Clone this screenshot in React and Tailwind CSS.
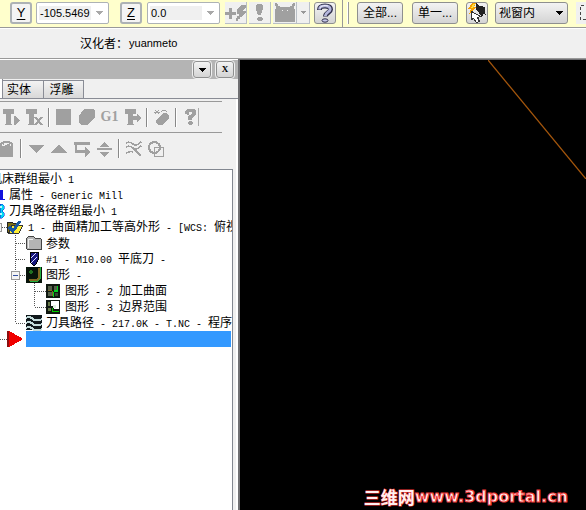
import React from "react";

const cjk = 'font-["Liberation_Sans","Noto_Sans_CJK_SC",sans-serif]';

/* Half-width characters take half the advance of a full-width one. */
function Mono({ text }) {
  return text.split(/([\x20-\x7e]+)/).map((part, i) =>
    /^[\x20-\x7e]+$/.test(part) ? (
      <span key={i} className='whitespace-pre font-["Liberation_Mono",monospace] text-[10px]'>{part}</span>
    ) : (
      <span key={i}>{part}</span>
    )
  );
}

function Icon({ w = 16, h = 16, className = "", children }) {
  return (
    <svg width={w} height={h} viewBox={`0 0 ${w} ${h}`} className={`block shrink-0 ${className}`} shapeRendering="crispEdges" aria-hidden="true">
      {children}
    </svg>
  );
}

const raised = "flex shrink-0 items-center justify-center rounded-[3px] border border-[#8e8f8f] bg-linear-to-b from-[#f3f3f3] to-[#d4d4d4] text-black";

function AxisButton({ children }) {
  return (
    <button className="flex size-[22px] shrink-0 items-center justify-center rounded-[3px] border-2 border-[#adb2b5] bg-[#f4f4f4] pb-px text-[13px] leading-none underline underline-offset-2">
      {children}
    </button>
  );
}

function Combo({ label, value, fill }) {
  return (
    <div className="flex h-[22px] w-[73px] shrink-0 items-center rounded-[2px] border border-[#adb2b5] bg-white pl-0.5">
      <input aria-label={label} defaultValue={value} className={`h-[14px] min-w-0 px-px text-[11px] leading-[14px] outline-none ${fill}`} />
      <button aria-label={`${label} list`} className="flex h-full flex-1 items-center justify-center">
        <Icon w={7} h={4}><path d="M0 0h7v1h-1v1h-1v1h-1v1h-1v-1h-1v-1h-1v-1h-1z" fill="#a9a9a9" /></Icon>
      </button>
    </div>
  );
}

function TopButton({ label, w = "w-[22px]", children }) {
  return (
    <button aria-label={label} className={`flex h-[22px] ${w} shrink-0 items-center justify-center border-r border-b border-[#b9bfc6] bg-[#f0f0f0]`}>
      {children}
    </button>
  );
}

function TopBar() {
  return (
    <div className="flex h-[28px] shrink-0 overflow-hidden border-b border-[#999] bg-[#ffffcc]">
      <div className="flex w-[343px] shrink-0 items-start border-r border-[#999] pt-0.5 pl-2.5">
        <AxisButton>Y</AxisButton>
        <div className="ml-1 flex"><Combo label="Y" value="-105.5469" fill="w-[52px] bg-[#f0f0f0]" /></div>
        <div className="ml-[11px] flex"><AxisButton>Z</AxisButton></div>
        <div className="ml-[5px] flex"><Combo label="Z" value="0.0" fill="w-[52px] bg-[#f0f0f0]" /></div>
        <div className="ml-[5px] flex gap-0.5">
          <TopButton label="Fast point">
            <Icon w={22} h={18}>
              <path d="M4 4h3v4h4v3h-4v4h-3v-4h-4v-3h4z" fill="#a0a0a0" />
              <path d="M16 1h5v2l-3 4h3v2l-5 4h-1v2h-2v2h-2v-3h1v-2h2v-2h-2v-4z" fill="#a0a0a0" />
            </Icon>
          </TopButton>
          <TopButton label="Point options">
            <Icon w={12} h={18}><path d="M3 0h5l1 2v3l-2 6h-3l-2-6v-3zM4 13h4l1 2-1 2h-4l-1-2z" fill="#a0a0a0" /></Icon>
          </TopButton>
          <div className="flex">
            <TopButton label="Snap" w="w-[24px]">
              <Icon w={22} h={19}>
                <path d="M1 0h2v1h1v2h2v1h10v-1h2v-2h1v-1h2v3h-1v3h1v13h-20v-13h1v-3h-1z" fill="#a0a0a0" />
                <path d="M8 7h1v1h-1zM13 7h1v1h-1z" fill="#f0f0f0" />
              </Icon>
            </TopButton>
            <TopButton label="Snap list" w="w-[13px]">
              <Icon w={5} h={3}><path d="M0 0h5v1h-1v1h-1v1h-1v-1h-1v-1h-1z" fill="#999" /></Icon>
            </TopButton>
          </div>
        </div>
        <button aria-label="Help" className={`${raised} ml-1 h-[22px] w-[22px]`}>
          <svg width="18" height="20" viewBox="0 0 18 20" aria-hidden="true">
            <path d="M3.500 7C3.500 3.500 6 3 9 3c4 0 5.500 1 5.500 3.500C14.500 9.500 9.500 9.500 9.500 13.500" fill="none" stroke="#30304a" strokeWidth="5" />
            <path d="M3.500 6.500C3.500 3.500 6 2.800 9 2.800c3.500 0 5.200 1 5.200 3.500C14 9 9.300 9.500 9.300 13" fill="none" stroke="#b4b6dc" strokeWidth="2.800" />
            <path d="M4 4.500C6 2.500 9 2 12 3" fill="none" stroke="#f4f4ff" />
            <ellipse cx="9" cy="17.500" rx="3" ry="1.700" fill="#c4c6e8" stroke="#30304a" />
          </svg>
        </button>
      </div>
      <div className="mt-0.5 ml-1 h-[22px] w-0.5 shrink-0 border-r border-[#999] bg-white" />
      <div className="ml-2 flex shrink-0 items-start pt-0.5">
        <button className={`${raised} h-[22px] w-[46px] pb-px text-xs`}>全部...</button>
        <button className={`${raised} ml-[9px] h-[22px] w-[46px] pb-px text-xs`}>单一...</button>
        <button aria-label="Select" className={`${raised} ml-2 h-[22px] w-[22px]`}>
          <Icon w={20} h={20}>
            <path d="M5 0h4l-2 4h3l-8 7 2-5h-3z" fill="#f5a000" />
            <path d="M6 1h2l-2 4h-2z" fill="#ffe040" />
            <path d="M9 0l4 3 5 1v5l1 3-3-1-2 1-4-4-1-3z" fill="#222" />
            <path d="M13 10l3 3" stroke="#222" strokeWidth="2" />
            <path d="M4.500 8.500v8l2-1 3 4 3-1-2-4 3-1z" fill="#fff" stroke="#333" />
          </Icon>
        </button>
        <div className="ml-[7px] grid items-center">
          <select aria-label="View" className="col-start-1 row-start-1 h-[22px] w-[73px] appearance-none rounded-[3px] border border-[#8e8f8f] bg-linear-to-b from-[#f3f3f3] to-[#d4d4d4] pl-[3px] text-xs leading-none text-black">
            <option>视窗内</option>
          </select>
          <Icon w={7} h={4} className="pointer-events-none col-start-1 row-start-1 mr-[5px] justify-self-end"><path d="M0 0h7v1h-1v1h-1v1h-1v1h-1v-1h-1v-1h-1v-1h-1z" fill="#000" /></Icon>
        </div>
        <button aria-label="Window" className="ml-2 h-[22px] w-6 bg-[#f0f0f0]">
          <Icon w={24} h={22}><path d="M4.500 3.500h18v14h-18z" fill="none" stroke="#444" strokeDasharray="3 2" /></Icon>
        </button>
      </div>
    </div>
  );
}

const g = "#a0a0a0";

function Tool({ label, children }) {
  return <button aria-label={label} className="flex h-[22px] w-[23px] shrink-0 items-center justify-center">{children}</button>;
}
function Sep() {
  return <div className="mx-[2px] h-[19px] w-0.5 shrink-0 border-l border-[#888] bg-white" />;
}

function ToolRows() {
  return (
    <div className="mr-[11px]">
      <div className="flex h-[31px] items-center border-t border-[#999]">
        <Tool label="Select all"><Icon w={17}><path d="M0 0h11v5h-3v10h1v1h-7v-1h1v-10h-3zM11 7h1l5 4-5 5h-1z" fill={g} /></Icon></Tool>
        <Tool label="Select dirty"><Icon w={17}><path d="M0 0h11v5h-3v10h1v1h-7v-1h1v-10h-3z" fill={g} /><path d="M9 8l7 8M16 8l-7 8" stroke={g} strokeWidth="2" /></Icon></Tool>
        <Sep />
        <Tool label="Regenerate all"><Icon><path d="M0 0h15v16h-15z" fill={g} /></Icon></Tool>
        <Tool label="Regenerate dirty"><Icon><path d="M5 0h9l2 2v7l-6 5-2 2h-6l-2-3v-6z" fill={g} /></Icon></Tool>
        <Tool label="Post"><span className='font-["Liberation_Serif",serif] text-sm leading-none font-bold text-[#a0a0a0]'>G1</span></Tool>
        <Tool label="Highfeed"><Icon><path d="M0 0h11v5h-3v10h1v1h-7v-1h1v-10h-3zM8 7h4v-3l4 5-4 5v-3h-4z" fill={g} /></Icon></Tool>
        <Sep />
        <Tool label="Verify"><Icon w={15}><path d="M2 11l7-7h3l3 3v2l-7 7h-4l-2-2z" fill={g} /><path d="M1 1l4 4M5 1l-4 4M0 3h6" stroke={g} /><path d="M7 3l2-2h2l2 2" fill="none" stroke={g} /></Icon></Tool>
        <Sep />
        <Tool label="Help"><Icon w={13}><path d="M1 5v-3l2-2h7l2 2v4l-4 3v2h-4v-4l4-2v-2h-3v3zM5 12h3l1 2-1 2h-3l-1-2z" fill={g} /></Icon></Tool>
        <div className="-ml-1 h-[18px] w-px bg-[#a9a9a9]" />
      </div>
      <div className="-ml-[5px] flex h-[32px] items-center border-t border-[#999]">
        <Tool label="Lock"><Icon w={13}><path d="M0 5h13v11h-13z" fill={g} /><path d="M1 6v-3l3-2h5l3 2v3" fill="none" stroke={g} strokeWidth="2" /><path d="M3 3h7v3h-7z" fill={g} /><path d="M3 5v-1h1v-1h3" fill="none" stroke="#f0f0f0" /></Icon></Tool>
        <Sep />
        <Tool label="Move down"><Icon><path d="M0 4h16l-8 8z" fill={g} /></Icon></Tool>
        <Tool label="Move up"><Icon><path d="M0 12h16l-8-9z" fill={g} /></Icon></Tool>
        <Tool label="Insert"><Icon><path d="M0 1h16v3h-13v5h8v-3l5 5-5 5v-4h-10v-8h-1z" fill={g} /></Icon></Tool>
        <Tool label="Scroll"><Icon w={15}><path d="M7 1l5 5h-10zM0 7h15v2h-15zM2 11h11l-6 5z" fill={g} /></Icon></Tool>
        <Sep />
        <Tool label="Toolpath display"><Icon><path d="M0 2q4-2 7 1t8-2M0 6q4-2 7 1t8-2M0 12q4-2 7-1M8 8l7 7" fill="none" stroke={g} strokeWidth="1.500" /></Icon></Tool>
        <Tool label="Geometry display"><Icon w={17}><circle cx="6.500" cy="6.500" r="5.500" fill="none" stroke={g} strokeWidth="2" /><path d="M6.500 6.500h9v9h-9z" fill="none" stroke={g} /></Icon></Tool>
      </div>
    </div>
  );
}

function Guide({ w, d, box }) {
  return (
    <Icon w={w} h={16}>
      <path d={d} fill="none" stroke="#555" strokeDasharray="1 1" />
      {box !== undefined && (
        <>
          <rect x={box + 0.5} y="4.500" width="8" height="8" fill="#f4f4f4" stroke="#999" />
          <path d={`M${box + 2} 8.500h5`} stroke="#3350a0" />
        </>
      )}
    </Icon>
  );
}

function Row({ guide, icon, text, gap = "ml-1" }) {
  return (
    <li className="flex h-4 items-center whitespace-nowrap">
      {guide}
      {icon}
      <span className={`${gap} leading-4`}><Mono text={text} /></span>
    </li>
  );
}

function Tree() {
  return (
    <ul className='flex-1 overflow-hidden border-t border-r border-[#828790] bg-white pt-px pr-px font-["Noto_Sans_CJK_SC",sans-serif] text-xs text-black'>
      <Row text="机床群组最小 1" gap="-ml-2.5" />
      <Row icon={<Icon w={5}><path d="M0 3h3v10h-3zM0 12h5v1h-5z" fill="#1111dd" /></Icon>} text="属性 - Generic Mill" />
      <Row icon={<Icon w={5}><path d="M0 1h2l2 2v3l-2 2 2 2v3l-2 2h-2z" fill="#00d8f0" stroke="#1111dd" strokeWidth=".5" /><path d="M0 3h2v2h-2zM0 10h2v2h-2z" fill="#b8f8ff" /></Icon>} text="刀具路径群组最小 1" />
      <Row
        guide={<Guide w={7} d="M2 8.500h5" box={-7} />}
        icon={<Icon><path d="M.5 3.500h5l1 1h4v9h-10z" fill="#7a6c14" stroke="#222" /><path d="M5 6h11l-4 8h-10z" fill="#ffee33" stroke="#333" /><path d="M2 8l4 4 7-10" fill="none" stroke="#1858a0" strokeWidth="3" /></Icon>}
        text="1 - 曲面精加工等高外形 - [WCS: 俯视"
        gap="ml-[5px]"
      />
      <Row
        guide={<Guide w={26} d="M15.500 0v16M16 8.500h10" />}
        icon={<Icon><path d="M.5 3.500l2-2h5l2 2h5l1 1v10h-14l-1-1z" fill="#b4b4b4" stroke="#444" /><path d="M2 4h5M2 5v8" stroke="#eee" /></Icon>}
        text="参数"
      />
      <Row
        guide={<Guide w={26} d="M15.500 0v16M16 8.500h10" />}
        icon={<Icon><path d="M4 1h8v8l-2 4-2 2-4-4z" fill="#16167c" stroke="#000" /><path d="M5 7l5-5M5 12l6-6" stroke="#d8d8ff" /></Icon>}
        text="#1 - M10.00 平底刀 - "
      />
      <Row
        guide={<Guide w={26} d="M15.500 0v16M16 8.500h10" box={11} />}
        icon={<Icon><path d="M0 0h16v16h-16z" fill="#07130a" /><path d="M4 3h1v1h1v1h-1v1h-1v-1h-1v-1h1z" fill="#30a030" stroke="#207020" /><path d="M12 1h2v11l-2 2h-9v-2h7l2-2z" fill="#806820" /><path d="M14 0v12l-2 2h-8" fill="none" stroke="#20b040" /></Icon>}
        text="图形 - "
      />
      <Row
        guide={<Guide w={46} d="M15.500 0v16M34.500 0v16M35 8.500h11" />}
        icon={<Icon w={14} h={14}><path d="M0 0h14v14h-14z" fill="#101810" /><path d="M2 2h4v4h-4zM8 2h4v4h-4zM2 8h4v4h-4z" fill="#56604a" /><path d="M2 6h4v1h-4zM6 7h1v5h-1z" fill="#806820" /><path d="M8 6h4v2h-4zM7 8h1v5h-1zM11 2h1v4h-1z" fill="#00d820" /><path d="M9 9h3v3h-3z" fill="#305030" /></Icon>}
        text="图形 - 2 加工曲面"
        gap="ml-[5px]"
      />
      <Row
        guide={<Guide w={46} d="M15.500 0v16M34.500 0v8M35 8.500h11" />}
        icon={<Icon w={14} h={14}><path d="M0 0h14v14h-14z" fill="#101810" /><path d="M5 1h8v8h-5v-3h-3z" fill="#fff" /><path d="M2 2h2v4h-2zM2 8h3v3h-3z" fill="#687848" /><path d="M7 5h3v3h-3z" fill="#dff0df" /><path d="M6 11h7v1h-7zM6 8h1v3h-1z" fill="#00cf00" /></Icon>}
        text="图形 - 3 边界范围"
        gap="ml-[5px]"
      />
      <Row
        guide={<Guide w={26} d="M15.500 0v8M16 8.500h10" />}
        icon={<Icon><path d="M0 0h16v15h-16z" fill="#10181c" /><path d="M0 3q4-2 7 1t9 0M0 8q4-2 7 1t9 0M0 13q4-2 7 1t9 0" fill="none" stroke="#c4dcdc" strokeWidth="2" /></Icon>}
        text="刀具路径 - 217.0K - T.NC - 程序"
      />
      <li className="flex h-4 items-center">
        <Guide w={7} d="M0 8.500h7" />
        <Icon w={19}><path d="M0 0h2l13 7v2l-13 7h-2z" fill="#f00000" /><path d="M0 0h2v16h-2z" fill="#8c1010" /></Icon>
        <div className="h-4 flex-1 bg-[#3399ff]" />
      </li>
    </ul>
  );
}

function Panel() {
  return (
    <aside className="flex w-[240px] shrink-0 flex-col border-r-2 border-[#6f6f72] bg-[#f0f0f0]">
      <div className="flex h-[20px] shrink-0 items-center justify-end gap-[5px] border-t border-white bg-[#b4b4b4] pr-1">
        <button aria-label="Panel menu" className={`${raised} h-[17px] w-[18px] outline outline-[#f0f0f0]`}>
          <Icon w={7} h={4}><path d="M0 0h7v1h-1v1h-1v1h-1v1h-1v-1h-1v-1h-1v-1h-1z" fill="#000" /></Icon>
        </button>
        <button aria-label="Close" className={`${raised} h-[17px] w-[18px] font-["Liberation_Serif",serif] text-[9px] leading-none font-bold outline outline-[#f0f0f0]`}>X</button>
      </div>
      <div className="flex h-[20px] shrink-0 items-end border-b border-[#898c95]" role="tablist">
        <div className="h-[19px] w-[3px] border-r border-[#898c95] bg-white" />
        <button role="tab" className="h-[18px] w-[41px] border-t border-r border-[#898c95] bg-linear-to-b from-[#f3f3f3] to-[#d8d8d8] pr-2 text-xs leading-4">实体</button>
        <button role="tab" className="h-[18px] w-[40px] border-t border-r border-[#898c95] bg-linear-to-b from-[#f3f3f3] to-[#d8d8d8] pr-1 text-xs leading-4">浮雕</button>
      </div>
      <div className="flex flex-1 flex-col border-r-2 border-white pt-0.5">
        <div className="flex flex-1 flex-col pr-[3px]">
          <div className="h-[68px] shrink-0 overflow-hidden"><ToolRows /></div>
          <Tree />
        </div>
      </div>
    </aside>
  );
}

export default function App() {
  return (
    <div className={`flex h-screen flex-col overflow-hidden bg-[#f0f0f0] text-black ${cjk}`}>
      <TopBar />
      <div className="flex h-[31px] shrink-0 items-center border-t border-b border-t-white border-b-[#999] pl-20">
        <span className="text-xs">汉化者：</span>
        <span className="ml-px text-[11px]">yuanmeto</span>
      </div>
      <div className="flex min-h-0 flex-1">
        <Panel />
        <main className="flex flex-1 flex-col justify-between border-t border-[#6f6f72] bg-black">
          <svg width="98" height="119" viewBox="0 0 98 119" className="self-end" aria-hidden="true">
            <path d="M0 0L98 119" stroke="#a4560c" strokeWidth="1.300" />
          </svg>
          <div className="flex items-center self-end pr-[18px] pb-[3px] leading-5 font-bold whitespace-nowrap text-[#fff0f0] [-webkit-text-stroke:1px_#f03838]">
            <span className='font-["Noto_Sans_CJK_SC",sans-serif] text-[17px] leading-5 [paint-order:stroke_fill]'>三维网</span>
            <span className='font-["DejaVu_Sans",sans-serif] text-base leading-5'>www.3dportal.cn</span>
          </div>
        </main>
      </div>
    </div>
  );
}
